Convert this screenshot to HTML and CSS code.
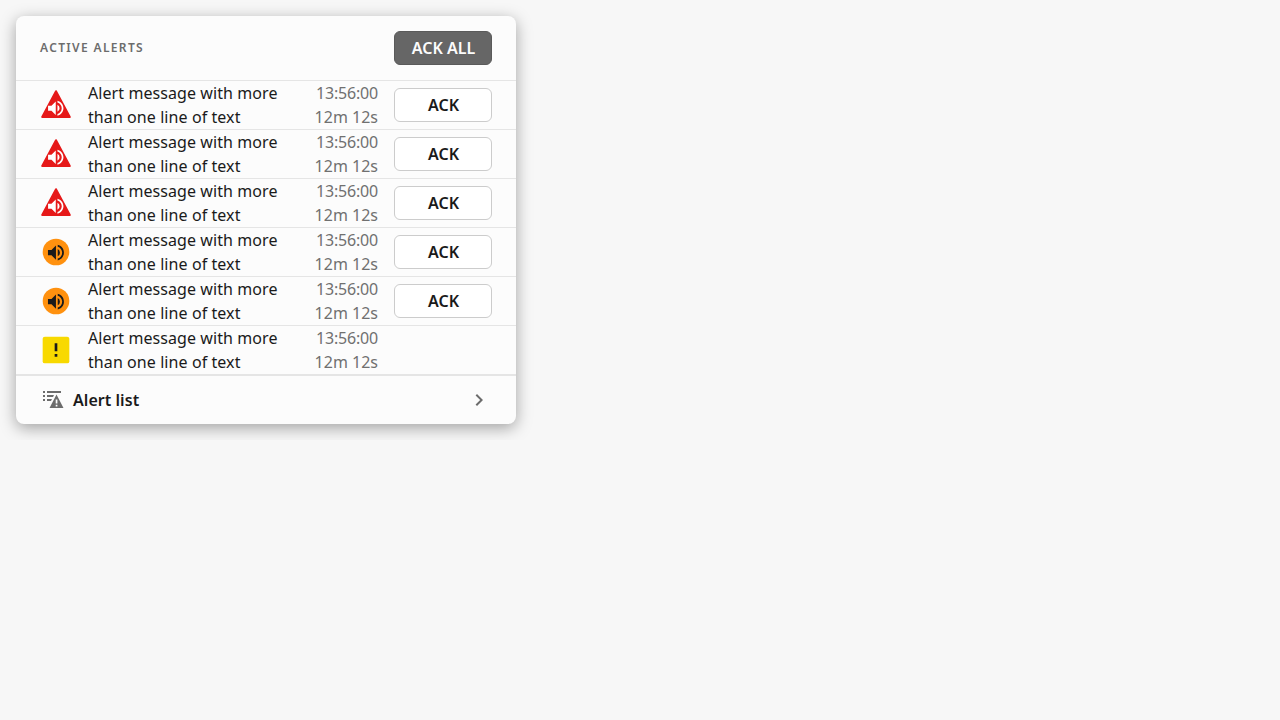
FILE: index.html
```
<!DOCTYPE html>
<html lang="en">
<head>
<meta charset="utf-8">
<title>Active alerts</title>
<link rel="stylesheet" href="styles.css">
</head>
<body>
<svg class="defs" width="0" height="0">
  <symbol id="speaker" viewBox="0 0 24 24"><path d="M3 9v6h4l5 5V4L7 9H3zm13.500 3A4.500 4.500 0 0 0 14 7.970v8.050A4.500 4.500 0 0 0 16.500 12zM14 3.230v2.060c2.890.860 5 3.540 5 6.710s-2.110 5.850-5 6.710v2.060c4.010-.910 7-4.490 7-8.770s-2.990-7.860-7-8.770z"/></symbol>
  <symbol id="alarm" viewBox="0 0 32 32"><path d="M16 2.200L29.800 28H2.200z" fill="#e61919" stroke="#e61919" stroke-width="2" stroke-linejoin="round"/><use href="#speaker" x="5.500" y="9" width="20.500" height="20.500" fill="#fff"/></symbol>
  <symbol id="warning" viewBox="0 0 32 32"><circle cx="16" cy="16" r="13.300" fill="#ff910f"/><use href="#speaker" x="5.300" y="6" width="21.300" height="21.300" fill="#1a1a1a"/></symbol>
  <symbol id="caution" viewBox="0 0 32 32"><rect x="2.670" y="2.670" width="26.660" height="26.660" rx="2.200" fill="#f8d900"/><path d="M14.670 9.330h2.660v8h-2.660zM14.670 20h2.660v2.670h-2.660z" fill="#1a1a1a"/></symbol>
</svg>
<section class="card">
  <header class="head"><h1 class="title">ACTIVE ALERTS</h1><button class="btn btn-dark">ACK ALL</button></header>
  <ul class="list">
    <li class="row"><svg class="icon"><use href="#alarm"/></svg><p class="msg">Alert message with more than one line of text</p><div class="time"><span class="clock">13:56:00</span>12m 12s</div><button class="btn">ACK</button></li>
    <li class="row"><svg class="icon"><use href="#alarm"/></svg><p class="msg">Alert message with more than one line of text</p><div class="time"><span class="clock">13:56:00</span>12m 12s</div><button class="btn">ACK</button></li>
    <li class="row"><svg class="icon"><use href="#alarm"/></svg><p class="msg">Alert message with more than one line of text</p><div class="time"><span class="clock">13:56:00</span>12m 12s</div><button class="btn">ACK</button></li>
    <li class="row"><svg class="icon"><use href="#warning"/></svg><p class="msg">Alert message with more than one line of text</p><div class="time"><span class="clock">13:56:00</span>12m 12s</div><button class="btn">ACK</button></li>
    <li class="row"><svg class="icon"><use href="#warning"/></svg><p class="msg">Alert message with more than one line of text</p><div class="time"><span class="clock">13:56:00</span>12m 12s</div><button class="btn">ACK</button></li>
    <li class="row"><svg class="icon"><use href="#caution"/></svg><p class="msg">Alert message with more than one line of text</p><div class="time"><span class="clock">13:56:00</span>12m 12s</div><span class="slot"></span></li>
  </ul>
  <footer class="foot">
    <svg class="foot-icon" viewBox="0 0 24 24"><path d="M2 3h2v2H2zM6 3h14v2H6zM2 7h2v2H2zM6 7h7l-1 2H6zM2 11h2v2H2zM6 11h5l-1 2H6z"/><path fill-rule="evenodd" d="M15.500 6.500L22.500 20H8.500zM14.700 11.500v4h1.700v-4zM14.700 16.800v1.700h1.700v-1.700z"/></svg>
    <span class="foot-label">Alert list</span>
    <svg class="chev" viewBox="0 0 24 24"><path d="M8.590 16.590L13.170 12 8.590 7.410 10 6l6 6-6 6z"/></svg>
  </footer>
</section>
</body>
</html>
```
FILE: styles.css
```
* { box-sizing: border-box; }
body {
  margin: 0;
  padding: 16px;
  background: #f7f7f7;
  color: #1a1a1a;
  font: 16px/24px "Noto Sans", sans-serif;
}
.defs { position: absolute; }
.card {
  width: 500px;
  border-radius: 8px;
  background: #fcfcfc;
  box-shadow: 0 4px 16px rgba(0, 0, 0, .35);
}
.head {
  display: flex;
  align-items: center;
  justify-content: space-between;
  height: 64px;
  padding: 0 24px;
}
.title {
  margin: 0;
  color: #6c6c6c;
  font-size: 12px;
  font-weight: 600;
  letter-spacing: 1.34px;
}
.btn {
  width: 98px;
  height: 34px;
  padding: 0 0 0 1px;
  border: 1px solid #ccc;
  border-radius: 6px;
  background: #fff;
  color: #1a1a1a;
  font: 600 16px/24px "Noto Sans", sans-serif;
}
.btn-dark { border-color: #5a5a5a; background: #666; color: #fcfcfc; }
.list { margin: 0; padding: 0; list-style: none; }
.row {
  display: grid;
  grid-template-columns: 32px 204px 70px 98px;
  column-gap: 16px;
  align-items: center;
  height: 49px;
  padding: 0 24px;
  border-top: 1px solid #e5e5e5;
}
.icon { display: block; width: 32px; height: 32px; }
.msg { margin: 0; letter-spacing: .08px; }
.time { color: #707070; text-align: right; white-space: nowrap; }
.clock { display: block; letter-spacing: -.2px; }
.foot {
  display: flex;
  align-items: center;
  height: 50px;
  padding: 0 25px;
  border-top: 2px solid #e5e5e5;
}
.foot-icon, .chev { display: block; width: 24px; height: 24px; fill: #6c6c6c; }
.foot-label { flex: 1; padding-left: 8px; font-weight: 600; letter-spacing: .05px; }
```
